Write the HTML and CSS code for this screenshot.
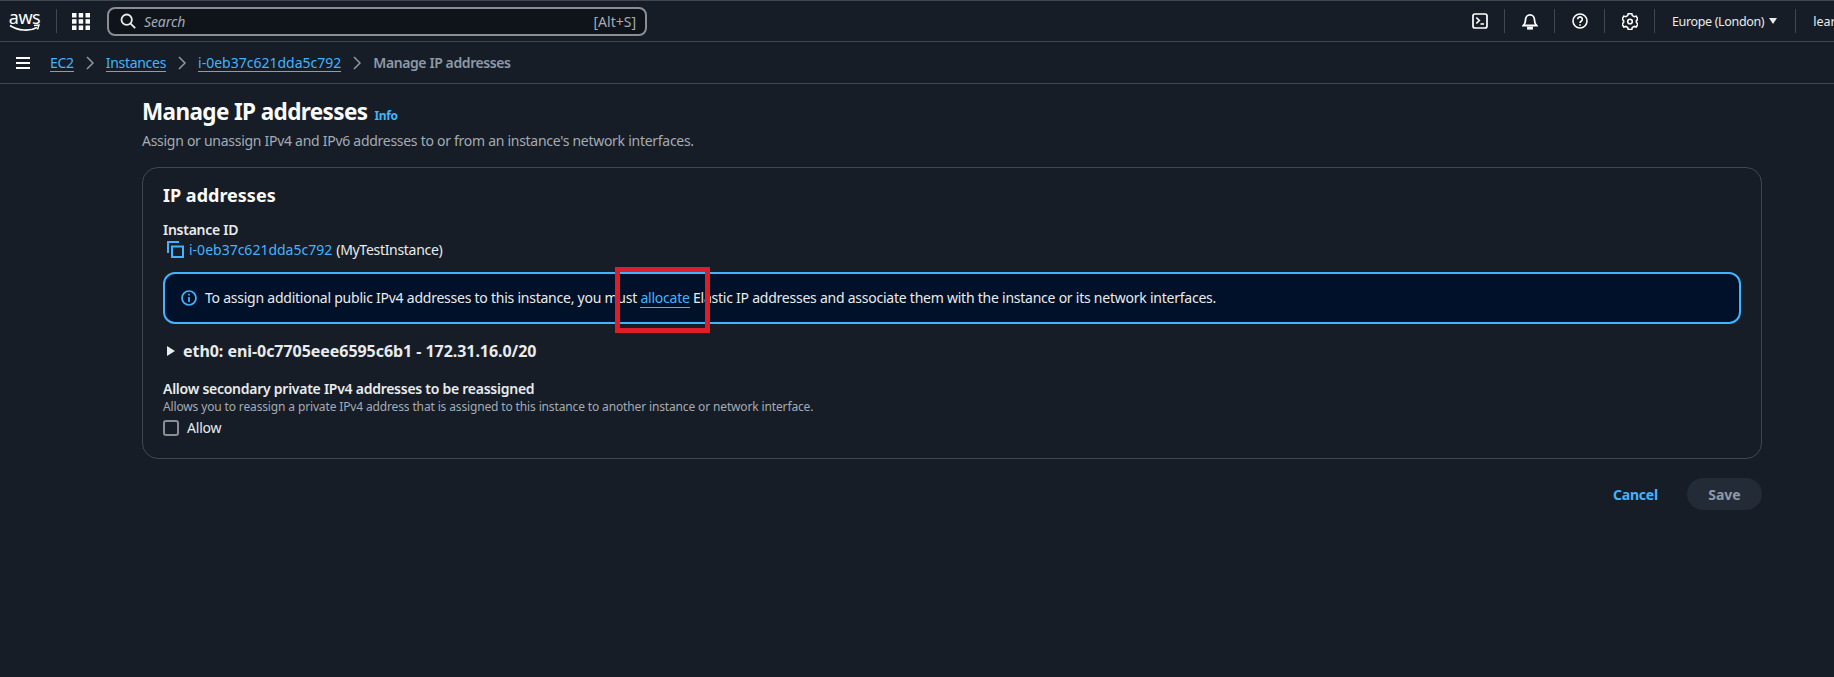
FILE: index.html
```html
<!DOCTYPE html>
<html lang="en">
<head>
<meta charset="utf-8">
<title>Manage IP addresses</title>
<link rel="stylesheet" href="styles.css">
</head>
<body>
<header class="topbar">
  <div class="logo">
    <span class="logo-text">aws</span>
    <svg class="logo-smile" width="32" height="8" viewBox="0 0 32 8"><path d="M1 1.500C9 7 21 7.500 28 3.500" fill="none" stroke="#fff" stroke-width="1.600"/><path d="M25 1.500l5-.5-1.500 4.500" fill="none" stroke="#fff" stroke-width="1.400"/></svg>
  </div>
  <span class="sep logo-sep"></span>
  <svg class="grid-icon" width="18" height="17" viewBox="0 0 18 17" fill="#fff"><rect x="0" y="0" width="4.500" height="4.500"/><rect x="6.700" y="0" width="4.500" height="4.500"/><rect x="13.500" y="0" width="4.500" height="4.500"/><rect x="0" y="6.200" width="4.500" height="4.500"/><rect x="6.700" y="6.200" width="4.500" height="4.500"/><rect x="13.500" y="6.200" width="4.500" height="4.500"/><rect x="0" y="12.500" width="4.500" height="4.500"/><rect x="6.700" y="12.500" width="4.500" height="4.500"/><rect x="13.500" y="12.500" width="4.500" height="4.500"/></svg>
  <div class="search">
    <svg width="16" height="16" viewBox="0 0 16 16" fill="none" stroke="#e9ebed" stroke-width="1.800"><circle cx="6.700" cy="6.700" r="5.200"/><path d="M10.600 10.600l4.600 4.600"/></svg>
    <span class="search-text">Search</span>
    <span class="search-key">[Alt+S]</span>
  </div>
  <div class="top-right">
    <span class="icon-cell"><svg width="16" height="16" viewBox="0 0 16 16" fill="none" stroke="#fff" stroke-width="1.700"><rect x="1" y="1" width="14" height="14" rx="2"/><path d="M4.300 4.500l3 3-3 3M8.500 11h3.500"/></svg></span>
    <span class="sep"></span>
    <span class="icon-cell"><svg width="16" height="17" viewBox="0 0 16 17" fill="none" stroke="#fff" stroke-width="1.800"><path d="M1.500 12.500h13c-1.600-1.600-2-3-2-5.500 0-3-2-5.200-4.500-5.200S3.500 4 3.500 7c0 2.500-.4 3.900-2 5.500z"/><path d="M6 14.500h4v1.200H6z" fill="#fff"/></svg></span>
    <span class="sep"></span>
    <span class="icon-cell"><svg width="16" height="16" viewBox="0 0 16 16" fill="none" stroke="#fff" stroke-width="1.600"><circle cx="8" cy="8" r="7"/><path d="M5.700 6.200a2.300 2.300 0 1 1 3.500 2c-.8.500-1.200 1-1.200 1.800"/><path d="M8 11.200v1.600"/></svg></span>
    <span class="sep"></span>
    <span class="icon-cell"><svg width="16" height="17" viewBox="0 0 16 17" fill="none" stroke="#fff" stroke-width="1.600"><path d="M6.200 1h3.600l.5 2 1.900 1.100 2-.6 1.700 3-1.500 1.500v1.900l1.500 1.500-1.700 3-2-.6-1.900 1.100-.5 2H6.200l-.5-2-1.900-1.100-2 .6-1.700-3L1.600 9.900V8L.1 6.500l1.700-3 2 .6L5.700 3z" transform="translate(0 -.4)"/><circle cx="8" cy="8.500" r="2.300"/></svg></span>
    <span class="sep"></span>
    <span class="region">Europe (London)</span>
    <span class="caret"></span>
    <span class="sep region-sep"></span>
    <span class="account">lear</span>
  </div>
</header>
<nav class="crumbs">
  <svg class="menu" width="14" height="12" viewBox="0 0 14 12" fill="#fff"><rect width="14" height="2"/><rect y="5" width="14" height="2"/><rect y="10" width="14" height="2"/></svg>
  <a class="crumb narrow">EC2</a>
  <svg class="chev" width="8" height="14" viewBox="0 0 8 14" fill="none" stroke="#8d99a8" stroke-width="1.500"><path d="M1 1l6 6-6 6"/></svg>
  <a class="crumb narrow">Instances</a>
  <svg class="chev" width="8" height="14" viewBox="0 0 8 14" fill="none" stroke="#8d99a8" stroke-width="1.500"><path d="M1 1l6 6-6 6"/></svg>
  <a class="crumb">i-0eb37c621dda5c792</a>
  <svg class="chev" width="8" height="14" viewBox="0 0 8 14" fill="none" stroke="#8d99a8" stroke-width="1.500"><path d="M1 1l6 6-6 6"/></svg>
  <span class="crumb-current">Manage IP addresses</span>
</nav>
<main class="page">
  <div class="title-row">
    <h1 class="title">Manage IP addresses</h1>
    <span class="info">Info</span>
  </div>
  <p class="subtitle">Assign or unassign IPv4 and IPv6 addresses to or from an instance's network interfaces.</p>
  <section class="card">
    <h2 class="card-title">IP addresses</h2>
    <div class="label first">Instance ID</div>
    <div class="instance">
      <svg width="17" height="17" viewBox="0 0 17 17" fill="none" stroke="#42b4ff" stroke-width="2"><path d="M1 12V1h11"/><rect x="5" y="5.500" width="11" height="10.500"/></svg>
      <a class="instance-link">i-0eb37c621dda5c792</a>
      <span class="instance-name">(MyTestInstance)</span>
    </div>
    <div class="alert">
      <svg width="16" height="16" viewBox="0 0 16 16" fill="none" stroke="#42b4ff" stroke-width="1.700"><circle cx="8" cy="8" r="7"/><path d="M8 7v5M8 3.800v1.800"/></svg>
      <span>To assign additional public IPv4 addresses to this instance, you must <a class="alert-link">allocate</a> Elastic IP addresses and associate them with the instance or its network interfaces.</span>
      <span class="highlight"></span>
    </div>
    <div class="eni">
      <span class="eni-caret"></span>
      <span>eth0: eni-0c7705eee6595c6b1 - 172.31.16.0/20</span>
    </div>
    <div class="label reassign">Allow secondary private IPv4 addresses to be reassigned</div>
    <div class="hint">Allows you to reassign a private IPv4 address that is assigned to this instance to another instance or network interface.</div>
    <div class="check-row">
      <span class="checkbox"></span>
      <span>Allow</span>
    </div>
  </section>
  <div class="actions">
    <span class="cancel">Cancel</span>
    <span class="save">Save</span>
  </div>
</main>
</body>
</html>
```
FILE: styles.css
```css
* { box-sizing: border-box; }
html, body { margin: 0; height: 100%; }
body {
  background: #161d26;
  color: #e9ebed;
  font-family: "Noto Sans", "Open Sans", sans-serif;
  font-size: 14px;
  overflow: hidden;
}
.topbar {
  height: 42px;
  display: flex;
  align-items: center;
  padding: 0 0 0 9px;
  border-top: 1px solid #424650;
  border-bottom: 1px solid #424650;
  background: #161d26;
}
.logo { width: 31px; display: flex; flex-direction: column; align-items: center; margin-top: -2px; }
.logo-text { color: #fff; font-size: 18px; line-height: 16px; letter-spacing: -0.5px; }
.logo-smile { margin-top: -1px; }
.sep { width: 1px; height: 24px; background: #424650; flex: none; }
.logo-sep { margin-left: 16px; }
.grid-icon { margin-left: 15px; flex: none; }
.search {
  margin-left: 17px;
  width: 540px;
  height: 29px;
  background: #0f141a;
  border: 2px solid #8c8c94;
  border-radius: 8px;
  display: flex;
  align-items: center;
  padding: 0 9px 0 11px;
}
.search-text { font-style: italic; color: #a4abb5; font-size: 14px; letter-spacing: -0.1px; margin-left: 8px; }
.search-key { margin-left: auto; color: #a4abb5; font-size: 14px; letter-spacing: 0; }
.top-right { margin-left: auto; display: flex; align-items: center; width: 379px; flex: none; }
.icon-cell { width: 49px; display: flex; justify-content: center; flex: none; }
.region { color: #e9ebed; font-size: 12.500px; letter-spacing: -0.35px; margin-left: 17px; white-space: nowrap; }
.caret { width: 0; height: 0; border-left: 4.500px solid transparent; border-right: 4.500px solid transparent; border-top: 6px solid #e9ebed; margin-left: 5px; }
.region-sep { margin-left: 18px; margin-right: 17px; }
.account { font-size: 12.500px; white-space: nowrap; }
.crumbs {
  height: 42px;
  display: flex;
  align-items: center;
  padding: 0 0 0 16px;
  border-bottom: 1px solid #424650;
  font-size: 14px;
}
.menu { margin-right: 20px; flex: none; }
.crumb { color: #42b4ff; border-bottom: 1px solid #42b4ff; line-height: 17px; }
.narrow { letter-spacing: -0.3px; }
.chev { margin: 0 12px; flex: none; }
.crumb-current { color: #8d99a8; font-weight: 600; letter-spacing: -0.4px; }
.page { padding: 14px 72px 0 142px; }
.title-row { display: flex; align-items: center; height: 28px; }
.title { margin: 0; font-size: 22.500px; font-weight: 700; color: #fbfbfb; line-height: 28px; letter-spacing: -0.62px; }
.info { color: #42b4ff; font-size: 12px; font-weight: 700; margin-left: 7px; margin-top: 6px; letter-spacing: -0.3px; }
.subtitle { margin: 5px 0 0; font-size: 14px; color: #a4abb5; line-height: 20px; letter-spacing: -0.28px; }
.card {
  margin-top: 16px;
  height: 292px;
  border: 1px solid #424650;
  border-radius: 16px;
  padding: 15px 20px 0;
}
.card-title { margin: 0; font-size: 18px; font-weight: 700; color: #fbfbfb; line-height: 24px; }
.label { font-weight: 600; font-size: 14px; line-height: 19px; color: #e9ebed; letter-spacing: -0.26px; }
.first { margin-top: 13px; }
.instance { display: flex; align-items: center; gap: 4px; height: 20px; margin-left: 4px; }
.instance-link { color: #42b4ff; margin-left: 1px; }
.instance-name { letter-spacing: -0.3px; }
.alert {
  position: relative;
  margin-top: 13px;
  height: 52px;
  background: #001129;
  border: 2px solid #42b4ff;
  border-radius: 12px;
  display: flex;
  align-items: center;
  gap: 8px;
  padding: 0 16px 1px;
  color: #e9ebed;
  letter-spacing: -0.24px;
}
.alert-link { color: #42b4ff; border-bottom: 1px solid #42b4ff; }
.highlight {
  position: absolute;
  left: 450px;
  top: -7px;
  width: 95px;
  height: 66px;
  border: 5px solid #dd1e2a;
}
.eni { display: flex; align-items: center; gap: 8px; margin-top: 16px; margin-left: 4px; font-size: 16px; font-weight: 700; line-height: 22px; color: #e9ebed; letter-spacing: -0.05px; }
.eni-caret { width: 0; height: 0; border-top: 5px solid transparent; border-bottom: 5px solid transparent; border-left: 8px solid #e9ebed; }
.reassign { margin-top: 17px; }
.hint { font-size: 12px; color: #a4abb5; line-height: 16px; letter-spacing: -0.14px; margin-top: 1px; }
.check-row { display: flex; align-items: center; gap: 8px; margin-top: 3px; line-height: 20px; letter-spacing: -0.2px; }
.checkbox { width: 16px; height: 16px; border: 2px solid #8c8c94; border-radius: 3px; }
.actions { display: flex; justify-content: flex-end; align-items: center; margin-top: 19px; gap: 29px; }
.cancel { color: #42b4ff; font-weight: 700; letter-spacing: -0.2px; }
.save {
  width: 75px;
  height: 32px;
  display: flex;
  align-items: center;
  justify-content: center;
  border-radius: 16px;
  background: #232b37;
  color: #8d99a8;
  font-weight: 700;
}
```
